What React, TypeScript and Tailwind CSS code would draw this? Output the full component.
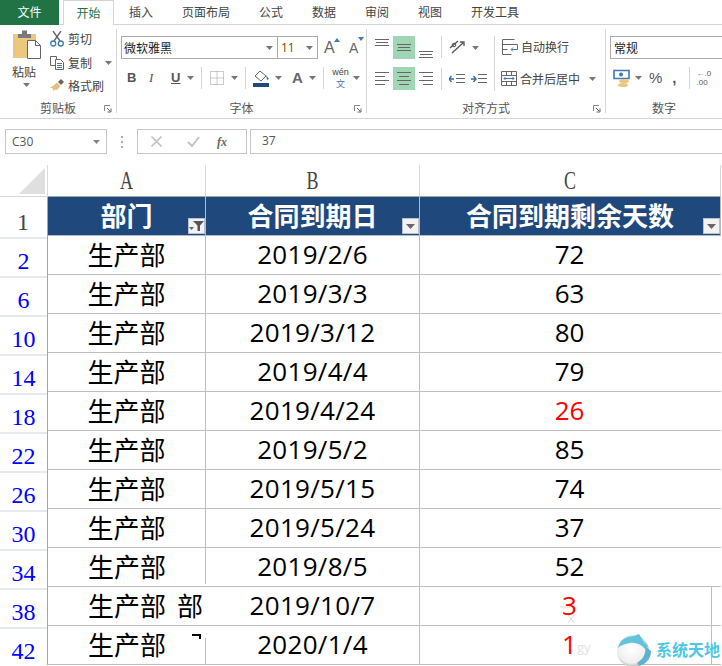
import React from "react";

const Caret = ({ c = "#777", className = "" }: { c?: string; className?: string }) => (
  <svg width="7" height="4" viewBox="0 0 7 4" className={"shrink-0 " + className}><path d="M0 0h7L3.5 4z" fill={c} /></svg>
);
const Launcher = () => (
  <svg width="8" height="8" viewBox="0 0 8 8" className="absolute right-[4px] bottom-[0px]">
    <path d="M.5 6V.5H6" fill="none" stroke="#888" />
    <path d="M3 3l3.5 3.5M7 3.5V7H3.5" fill="none" stroke="#666" />
  </svg>
);
const Sep = ({ h = "h-[22px]", className = "" }: { h?: string; className?: string }) => (
  <div className={"w-px bg-[#d6d6d6] shrink-0 " + h + " " + className} />
);
const Group = ({ w, label, launcher, last, children }: { w: string; label: string; launcher?: boolean; last?: boolean; children: React.ReactNode }) => (
  <div className={"relative flex flex-col h-[84px] shrink-0 " + w + (last ? "" : " border-r border-[#d6d6d6]")}>
    <div className="h-[71px] relative">{children}</div>
    <div className="h-[13px] pt-[3px] flex items-center justify-center text-[12px] leading-[14px] text-[#555]">{label}</div>
    {launcher ? <Launcher /> : null}
  </div>
);
const Lines = ({ kind }: { kind: "l" | "c" | "r" }) => {
  const d = kind === "l" ? "M0 1.5h14M0 5.5h10M0 9.5h14M0 13.5h10" : kind === "c" ? "M0 1.5h14M2 5.5h10M0 9.5h14M2 13.5h10" : "M0 1.5h14M4 5.5h10M0 9.5h14M4 13.5h10";
  return <svg width="14" height="15" viewBox="0 0 14 15"><path d={d} stroke="#666" fill="none" /></svg>;
};
const VLines = () => <svg width="14" height="8" viewBox="0 0 14 8"><path d="M0 .5h14M1 3.5h12M0 6.5h14" stroke="#666" fill="none" /></svg>;

const FilterBtn = ({ on }: { on?: boolean }) => (
  <div className="absolute right-0 bottom-[1px] w-[17px] h-[16px] bg-[#f2f2f2] border border-[#b8c0cc] flex items-center justify-center">
    {on ? (
      <svg width="15" height="12" viewBox="0 0 15 12"><path d="M4 1h11l-4 4.500V11H8.500V5.500z" fill="#555" /><path d="M0 7h5L2.500 10z" fill="#666" /></svg>
    ) : (
      <svg width="9" height="5" viewBox="0 0 9 5"><path d="M0 0h9L4.500 5z" fill="#666" /></svg>
    )}
  </div>
);

const rows: [number, string, string, boolean][] = [
  [2, "2019/2/6", "72", false],
  [6, "2019/3/3", "63", false],
  [10, "2019/3/12", "80", false],
  [14, "2019/4/4", "79", false],
  [18, "2019/4/24", "26", true],
  [22, "2019/5/2", "85", false],
  [26, "2019/5/15", "74", false],
  [30, "2019/5/24", "37", false],
  [34, "2019/8/5", "52", false],
  [38, "2019/10/7", "3", true],
  [42, "2020/1/4", "1", true],
];

const ColHead = ({ t }: { t: string }) => (
  <div className="flex items-center justify-center h-[32px] border-b border-r border-b-[#a6a6a6] border-r-[#d8d8d8]">
    <span className="font-['Liberation_Serif',serif] text-[18px] leading-[20px] text-[#444] scale-y-[1.4] block">{t}</span>
  </div>
);

const HeadCell = ({ t, on }: { t: string; on?: boolean }) => (
  <div className="relative h-[39px] pb-[2px] bg-[#1f497d] border-r border-b border-[#b4bac4] flex items-center justify-center text-white font-bold text-[26px] leading-[36px]">
    {t}
    <FilterBtn on={on} />
  </div>
);

export default function App() {
  return (
    <div className="relative w-[722px] h-[666px] overflow-hidden bg-white font-['Noto_Sans_CJK_SC',sans-serif] text-[#444]">
      {/* tabs */}
      <div className="flex h-[25px] border-b border-[#d4d4d4] text-[12px] leading-[24px]">
        <div className="w-[59px] h-[25px] bg-[#217346] text-white text-center">文件</div>
        <div className="ml-[4px] w-[51px] h-[25px] bg-white border border-b-0 border-[#d4d4d4] text-center text-[#217346]">开始</div>
        <div className="ml-[15px] flex gap-[29px]">
          {["插入", "页面布局", "公式", "数据", "审阅", "视图", "开发工具"].map((t) => (
            <span key={t}>{t}</span>
          ))}
        </div>
      </div>

      {/* ribbon */}
      <div className="h-[94px] border-b border-[#d4d4d4] pt-[4px] flex overflow-hidden">
        {/* clipboard */}
        <Group w="w-[117px]" label="剪贴板" launcher>
          <div className="flex">
            <div className="w-[50px] pl-[12px] flex flex-col">
              <svg width="30" height="30" viewBox="0 0 30 30">
                <path d="M1 5h23v24H1z" fill="#eec77f" />
                <path d="M6 5h13v4H6zM10 1.500h5V5h-5z" fill="#7a7a7a" />
                <path d="M15.500 11.500h8l5 5v13h-13z" fill="#fff" stroke="#666" />
                <path d="M23.500 11.500v5h5" fill="none" stroke="#666" />
              </svg>
              <span className="text-[12px] leading-[16px] mt-[5px]">粘贴</span>
              <Caret className="ml-[11px] mt-[3px]" />
            </div>
            <div className="flex flex-col text-[12px] -mt-[2px]">
              <div className="flex items-center h-[24px] gap-[4px]">
                <svg width="14" height="16" viewBox="0 0 14 16">
                  <path d="M3 0l7 10M11 0L4 10" stroke="#666" strokeWidth="1.400" fill="none" />
                  <circle cx="3.200" cy="12.500" r="2.500" fill="none" stroke="#3f7ab5" strokeWidth="1.300" />
                  <circle cx="10.800" cy="12.500" r="2.500" fill="none" stroke="#3f7ab5" strokeWidth="1.300" />
                </svg>
                <span>剪切</span>
              </div>
              <div className="flex items-center h-[23px] gap-[4px]">
                <svg width="14" height="14" viewBox="0 0 14 14">
                  <path d="M.5.500h6v9h-6z" fill="#fff" stroke="#666" />
                  <path d="M5.500 3.500h5l3 3v7h-8z" fill="#fff" stroke="#666" />
                  <path d="M7 7.500h5M7 9.500h5M7 11.500h5" stroke="#3f7ab5" />
                </svg>
                <span>复制</span>
                <Caret className="ml-[9px]" />
              </div>
              <div className="flex items-center h-[24px] gap-[4px]">
                <svg width="14" height="14" viewBox="0 0 14 14">
                  <path d="M8 3l3-3 3 3-3 3z" fill="#666" />
                  <path d="M7 3.500l3.500 3.500L7 11 0 8.500 3 7z" fill="#e6bd7a" />
                  <path d="M3 12l3-2-3-1z" fill="#e6bd7a" />
                </svg>
                <span>格式刷</span>
              </div>
            </div>
          </div>
        </Group>

        {/* font */}
        <Group w="w-[250px]" label="字体" launcher>
          <div className="pt-[7px] flex h-[30px]">
            <div className="ml-[4px] w-[157px] h-[23px] border border-[#ababab] flex items-center justify-between pl-[2px] pr-[4px] text-[12px] text-[#222]">
              微软雅黑<Caret />
            </div>
            <div className="w-[40px] h-[23px] border border-l-0 border-[#ababab] flex items-center justify-between pl-[3px] pr-[4px] text-[12px] text-[#7a4a00] font-['Open_Sans',sans-serif]">
              11<Caret />
            </div>
            <div className="ml-[5px] flex items-start gap-[4px] font-['Liberation_Sans',sans-serif] text-[#666]">
              <span className="relative w-[20px] text-[16px] leading-[23px] pl-[1px]">A<svg width="6" height="4" viewBox="0 0 6 4" className="absolute left-[11px] top-[2px]"><path d="M0 4l3-4 3 4z" fill="#3f7ab5" /></svg></span>
              <span className="relative w-[18px] text-[14px] leading-[25px] pl-[2px]">A<svg width="6" height="4" viewBox="0 0 6 4" className="absolute left-[11px] top-[1px]"><path d="M0 0l3 4 3-4z" fill="#3f7ab5" /></svg></span>
            </div>
          </div>
          <div className="mt-[7px] flex items-center h-[24px] font-['Liberation_Sans',sans-serif] text-[#555]">
            <span className="ml-[10px] w-[8px] text-[13px] font-bold">B</span>
            <span className="ml-[14px] w-[8px] text-[13px] italic font-['Liberation_Serif',serif]">I</span>
            <span className="ml-[14px] w-[10px] text-[13px] font-bold underline">U</span>
            <Caret className="ml-[6px]" />
            <Sep className="ml-[7px]" />
            <svg width="14" height="14" viewBox="0 0 14 14" className="ml-[8px]">
              <path d="M.5.500h13v13H.500zM.5 7h13M7 .5v13" fill="none" stroke="#999" strokeDasharray="1 1" />
            </svg>
            <Caret className="ml-[7px]" />
            <Sep className="ml-[7px]" />
            <svg width="17" height="17" viewBox="0 0 17 17" className="ml-[7px]">
              <path d="M7 1l6 5-5 5-6-5z" fill="#fff" stroke="#666" />
              <path d="M13 5l3 4-2 1z" fill="#3f7ab5" />
              <path d="M0 13h16v4H0z" fill="#1f497d" />
            </svg>
            <Caret className="ml-[5px]" />
            <span className="ml-[10px] w-[11px] text-[15px] font-bold text-[#666]">A</span>
            <Caret className="ml-[6px]" />
            <Sep className="ml-[7px]" />
            <div className="ml-[8px] w-[17px] flex flex-col items-center">
              <span className="text-[#444] text-[9px] leading-[11px]">wén</span>
              <span className="text-[#3f7ab5] text-[9px] leading-[11px] font-['Noto_Sans_CJK_SC',sans-serif]">文</span>
            </div>
            <Caret className="ml-[4px]" />
          </div>
        </Group>

        {/* alignment */}
        <Group w="w-[239px]" label="对齐方式" launcher>
          <div className="pt-[7px] flex h-[30px] items-start">
            <div className="ml-[8px] w-[14px] h-[23px] flex items-start pt-[3px]"><VLines /></div>
            <div className="ml-[4px] w-[22px] h-[23px] bg-[#a0d6b4] flex items-center justify-center"><VLines /></div>
            <div className="ml-[4px] w-[14px] h-[23px] flex items-end"><VLines /></div>
            <Sep className="ml-[8px]" />
            <svg width="17" height="17" viewBox="0 0 17 17" className="ml-[7px] mt-[3px]">
              <path d="M1 9l8-7M3 14L14 4M11 3h4v4" fill="none" stroke="#555" strokeWidth="1.300" />
              <circle cx="5" cy="6" r="1.800" fill="none" stroke="#555" />
            </svg>
            <Caret className="ml-[6px] mt-[10px]" />
            <div className="ml-[15px] w-px h-[55px] bg-[#d6d6d6]" />
            <svg width="16" height="16" viewBox="0 0 16 16" className="ml-[7px] mt-[3px]">
              <path d="M.5.500h12M.5 5.500h15M.5 10.500h5M.5 15.500h9" stroke="#666" fill="none" />
              <path d="M.5.500v15" stroke="#666" />
              <path d="M15.500 5.500v5h-6M11 8.500l-2 2 2 2" fill="none" stroke="#3f7ab5" />
            </svg>
            <span className="ml-[3px] text-[12px] leading-[22px]">自动换行</span>
          </div>
          <div className="absolute left-0 top-[38px] flex h-[23px] items-center">
            <div className="ml-[8px]"><Lines kind="l" /></div>
            <div className="ml-[4px] w-[22px] h-[23px] bg-[#a0d6b4] flex items-center justify-center"><Lines kind="c" /></div>
            <div className="ml-[4px]"><Lines kind="r" /></div>
            <Sep className="ml-[8px]" />
            <svg width="16" height="12" viewBox="0 0 16 12" className="ml-[7px]">
              <path d="M7 1.500h9M7 5.500h9M7 9.500h9" stroke="#666" />
              <path d="M5 6H0M2.500 3L0 6l2.500 3" fill="none" stroke="#2f6fb0" strokeWidth="1.400" />
            </svg>
            <svg width="16" height="12" viewBox="0 0 16 12" className="ml-[6px]">
              <path d="M7 1.500h9M7 5.500h9M7 9.500h9" stroke="#666" />
              <path d="M0 6h5M2.500 3L5 6 2.500 9" fill="none" stroke="#2f6fb0" strokeWidth="1.400" />
            </svg>
            <svg width="16" height="15" viewBox="0 0 16 15" className="ml-[14px]">
              <path d="M.5.500h15v14H.500zM.5 4.500h15M.5 10.500h15M5.500.5v4M10.500.5v4M5.500 10.500v4M10.500 10.500v4" fill="none" stroke="#666" />
              <path d="M3 7.500h10M4.500 6L3 7.500 4.500 9M11.500 6L13 7.500 11.500 9" fill="none" stroke="#3f7ab5" />
            </svg>
            <span className="ml-[3px] text-[12px]">合并后居中</span>
            <Caret className="ml-[9px]" />
          </div>
        </Group>

        {/* number */}
        <Group w="w-[116px]" label="数字" last>
          <div className="pt-[7px] pl-[4px] h-[30px]">
            <div className="w-[130px] h-[23px] border border-[#ababab] pl-[3px] text-[12px] leading-[21px] text-[#222]">常规</div>
          </div>
          <div className="mt-[7px] flex items-center h-[24px] pl-[7px]">
            <svg width="18" height="19" viewBox="0 0 18 19">
              <path d="M1 1.500h15v8H1z" fill="none" stroke="#3f7ab5" strokeWidth="1.600" />
              <circle cx="8" cy="5.500" r="2" fill="#3f7ab5" />
              <ellipse cx="11" cy="12" rx="5" ry="2" fill="#eec77f" />
              <ellipse cx="10" cy="16" rx="5" ry="2" fill="#eec77f" />
            </svg>
            <Caret className="ml-[4px]" />
            <span className="ml-[7px] text-[15px] font-['Liberation_Sans',sans-serif] text-[#555]">%</span>
            <span className="ml-[10px] text-[15px] font-bold font-['Liberation_Sans',sans-serif] text-[#555] leading-[16px]">,</span>
            <Sep className="ml-[12px]" />
            <div className="ml-[7px] flex flex-col text-[8px] leading-[9px] font-['Liberation_Sans',sans-serif] text-[#555]">
              <span><span className="text-[#3f7ab5]">←</span>.0</span>
              <span>.00</span>
            </div>
          </div>
        </Group>
      </div>

      {/* formula bar */}
      <div className="h-[46px] pt-[10px] flex items-start font-['Open_Sans',sans-serif] text-[12px] text-[#555]">
        <div className="ml-[5px] w-[102px] h-[25px] border border-[#c6c6c6] flex items-center justify-between pl-[6px] pr-[6px]">
          C30<Caret c="#888" />
        </div>
        <div className="ml-[14px] w-[3px] h-[25px] flex flex-col justify-center gap-[3px]">
          <div className="w-[2px] h-[2px] bg-[#aaa]" /><div className="w-[2px] h-[2px] bg-[#aaa]" /><div className="w-[2px] h-[2px] bg-[#aaa]" />
        </div>
        <div className="ml-[13px] w-[110px] h-[25px] border border-[#c6c6c6] flex items-center">
          <svg width="11" height="11" viewBox="0 0 11 11" className="ml-[13px]"><path d="M.5.500l10 10M10.500.5l-10 10" stroke="#c4c4c4" strokeWidth="1.600" /></svg>
          <svg width="13" height="11" viewBox="0 0 13 11" className="ml-[25px]"><path d="M1 6l4 4 7-9" fill="none" stroke="#c4c4c4" strokeWidth="2" /></svg>
          <span className="ml-[17px] italic font-bold font-['Liberation_Serif',serif] text-[12px] text-[#666]">fx</span>
        </div>
        <div className="ml-[3px] flex-1 h-[25px] border border-r-0 border-[#c6c6c6] pl-[11px] leading-[22px]">37</div>
      </div>

      {/* sheet */}
      <div className="grid grid-cols-[48px_158px_214px_301px] grid-rows-[32px] auto-rows-[39px]">
        <div className="relative h-[32px] border-r border-b border-[#d8d8d8]">
          <svg width="26" height="26" viewBox="0 0 26 26" className="absolute left-[19px] top-[3px]"><path d="M0 26L26 0v26z" fill="#dfdfdf" /></svg>
        </div>
        <ColHead t="A" />
        <ColHead t="B" />
        <ColHead t="C" />

        <div className="h-[39px] border-r border-[#a6a6a6] flex items-end justify-center font-['Liberation_Serif',serif] text-[24px] leading-[27px] text-[#444] pr-[1px]">1</div>
        <HeadCell t="部门" on />
        <HeadCell t="合同到期日" />
        <HeadCell t="合同到期剩余天数" />

        {rows.map(([n, d, v, red], i) => {
          const gapA = i >= 8;
          return (
            <React.Fragment key={n}>
              <div className="h-[39px] border-r border-[#a6a6a6] pt-[1px]">
                <div className="h-[38px] border-t-2 border-[#e6e9ee] flex items-end justify-center font-['Liberation_Serif',serif] text-[24px] leading-[27px] text-[#0000ff]">{n}</div>
              </div>
              <div className={"relative h-[39px] pb-[2px] border-b border-[#bfbfbf] flex items-center justify-center text-[26px] leading-[36px] text-black " + (gapA ? "" : "border-r")}>
                <span>生产部</span>
                {i === 8 ? <div className="absolute right-0 top-0 w-px h-[36px] bg-[#bfbfbf]" /> : null}
                {i === 9 ? <span className="absolute left-[129px] top-0">部</span> : null}
                {i === 10 ? (
                  <>
                    <span className="absolute left-[144px] top-[8px] w-[9px] h-[2px] bg-black" />
                    <span className="absolute left-[151px] top-[8px] w-[2px] h-[5px] bg-black" />
                    <div className="absolute right-0 bottom-0 w-px h-[26px] bg-[#bfbfbf]" />
                  </>
                ) : null}
              </div>
              <div className="h-[39px] pb-[2px] border-r border-b border-[#bfbfbf] flex items-center justify-center font-['Open_Sans',sans-serif] text-[26px] leading-[36px] tracking-[0.3px] text-black">{d}</div>
              <div className={"relative h-[39px] pb-[2px] border-b border-[#bfbfbf] flex items-center justify-center font-['Open_Sans',sans-serif] text-[26px] leading-[36px] pr-[2px] " + (red ? "text-[#ff0000]" : "text-black")}>
                {v}
                {i >= 9 ? <div className="absolute left-[291px] top-0 bottom-0 w-px bg-[#bfbfbf]" /> : null}
              </div>
            </React.Fragment>
          );
        })}
      </div>

      {/* watermark */}
      <svg width="22" height="24" viewBox="0 0 22 24" className="absolute left-[560px] top-[604px]">
        <path d="M0 3h10M8 11l6 8M14 11l-6 8" stroke="#d8d8d8" fill="none" />
      </svg>
      <span className="absolute left-[577px] top-[638px] text-[13px] text-[#e2e2e2] font-['Open_Sans',sans-serif]">gy</span>
      <div className="absolute left-[617px] top-[634px] flex items-start">
        <svg width="34" height="32" viewBox="0 0 34 32">
          <defs>
            <radialGradient id="ball" cx="45%" cy="45%" r="60%">
              <stop offset="0%" stopColor="#ffffff" />
              <stop offset="70%" stopColor="#f0f0f0" />
              <stop offset="100%" stopColor="#a9a9a9" />
            </radialGradient>
          </defs>
          <circle cx="16" cy="17" r="16" fill="url(#ball)" />
          <path d="M1 14C3 5 10 2 17 2l5-2 5 8 4 4-3 3c-4-5-10-7-15-6C8 10 4 11 1 14z" fill="#62c4dc" />
          <path d="M28 12l6 5c0 7-4 12-11 15l-3-3 5-4c3-4 4-8 3-13z" fill="#5bb4cf" />
        </svg>
        <span className="ml-[5px] mt-[5px] text-[16px] leading-[20px] font-bold text-[#4cc8e4]">系统天地</span>
      </div>
    </div>
  );
}
